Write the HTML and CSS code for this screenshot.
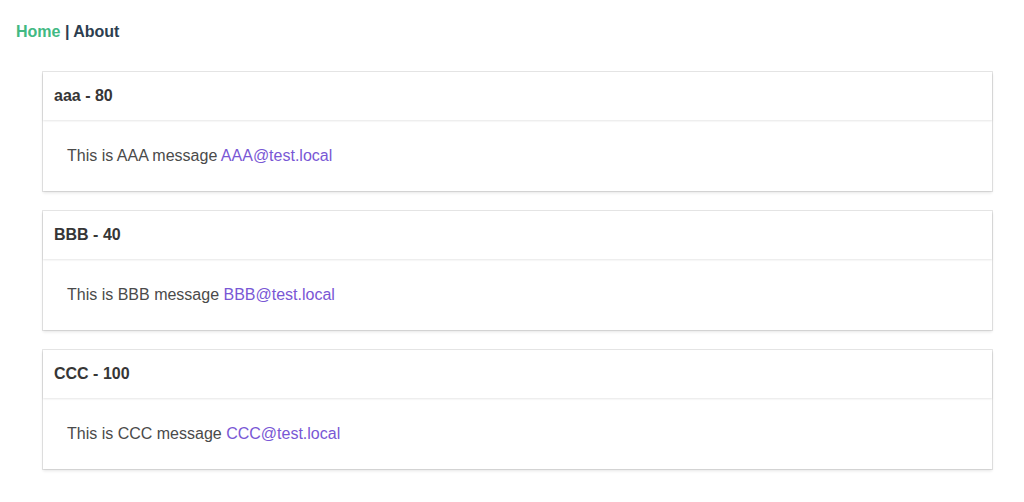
FILE: index.html
```html
<!DOCTYPE html>
<html>
<head>
<meta charset="utf-8">
<link rel="stylesheet" href="styles.css">
</head>
<body>
<div class="app">
  <nav class="nav">
    <a class="nav-link active" href="#">Home</a> | <a class="nav-link" href="#">About</a>
  </nav>
  <main class="list">
    <div class="card">
      <header class="card-header"><p class="card-title">aaa - 80</p></header>
      <div class="card-content">This is AAA message <a class="mail" href="#">AAA@test.local</a></div>
    </div>
    <div class="card">
      <header class="card-header"><p class="card-title">BBB - 40</p></header>
      <div class="card-content">This is BBB message <a class="mail" href="#">BBB@test.local</a></div>
    </div>
    <div class="card">
      <header class="card-header"><p class="card-title">CCC - 100</p></header>
      <div class="card-content">This is CCC message <a class="mail" href="#">CCC@test.local</a></div>
    </div>
  </main>
</div>
</body>
</html>
```
FILE: styles.css
```css
html, body {
  margin: 0;
  padding: 0;
  background: #fff;
}
body {
  font-family: "Liberation Sans", Arial, sans-serif;
  font-size: 16px;
  line-height: 24px;
  color: #4a4a4a;
}
.nav {
  padding: 20px 16px 0;
  font-weight: 700;
  color: #2c3e50;
}
.nav-link {
  color: #2c3e50;
  text-decoration: none;
}
.nav-link.active {
  color: #42b983;
}
.list {
  padding: 28px 32px 0 43px;
}
.card {
  background: #fff;
  box-shadow: 0 2px 3px rgba(10,10,10,0.1), 0 0 0 1px rgba(10,10,10,0.1);
  margin-bottom: 20px;
}
.card-header {
  display: flex;
  align-items: center;
  box-shadow: 0 1px 2px rgba(10,10,10,0.1);
}
.card-title {
  margin: 0;
  padding: 12px 11px;
  font-weight: 700;
  color: #363636;
}
.card-content {
  padding: 24px 24px 23px;
}
.mail {
  color: #7957d5;
  text-decoration: none;
}
```
